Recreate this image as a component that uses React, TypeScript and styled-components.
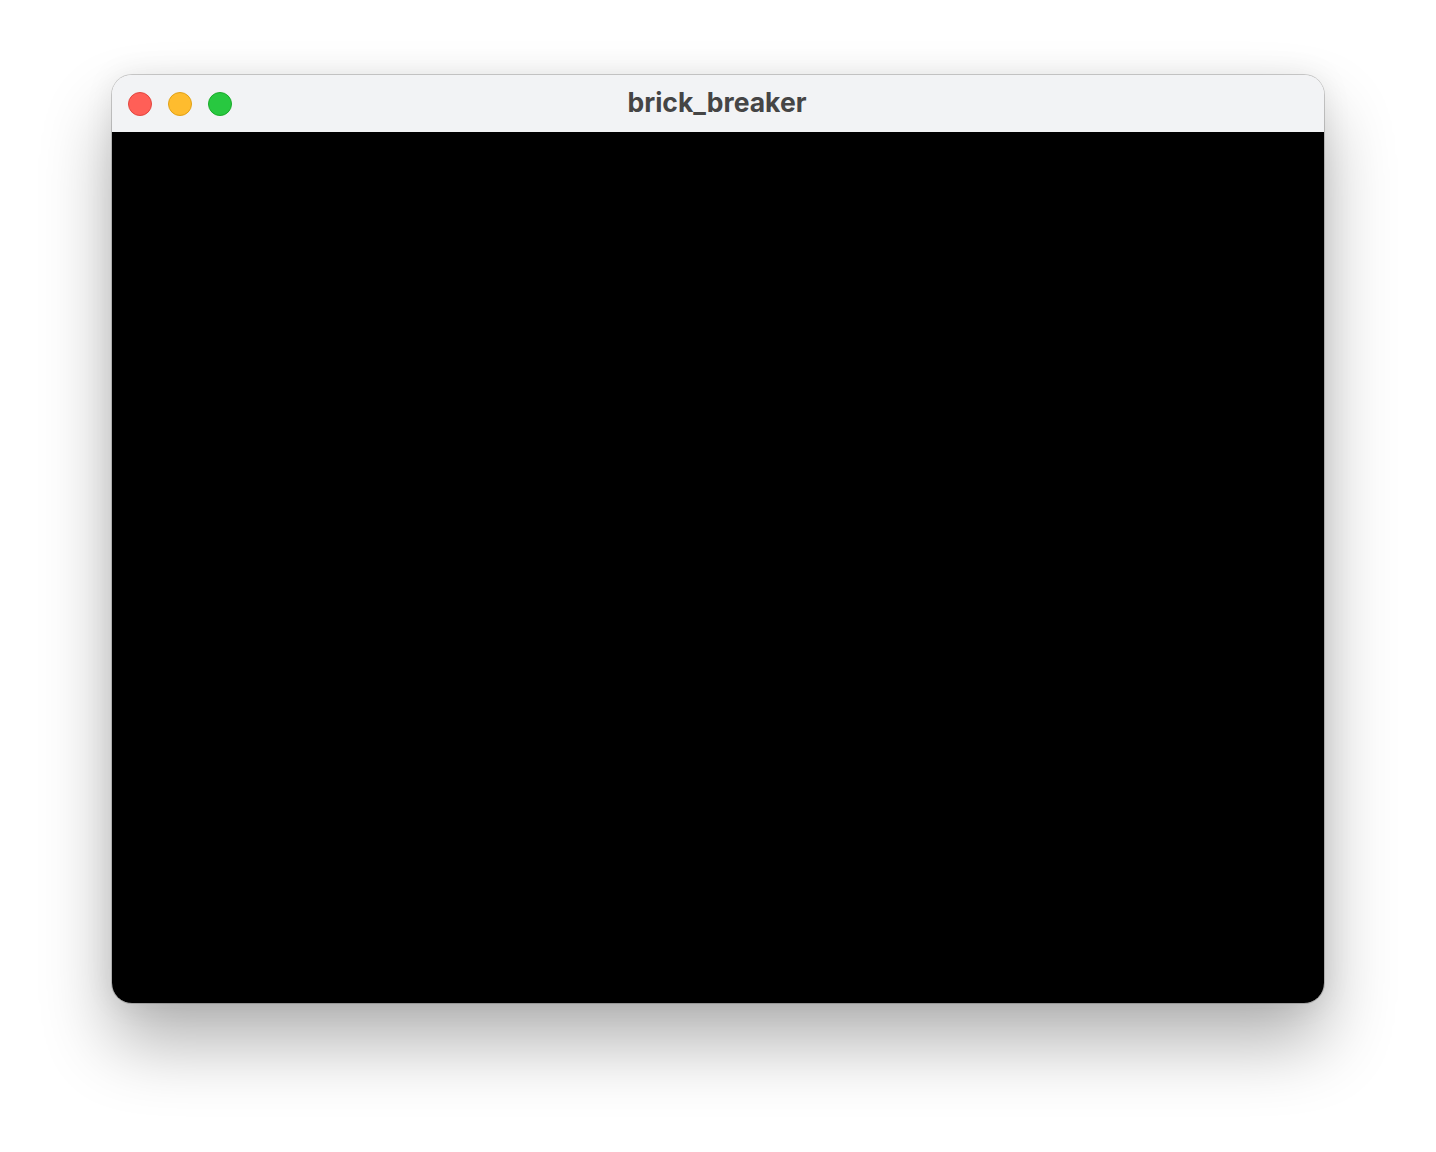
import React from 'react';
import styled, { createGlobalStyle } from 'styled-components';

const GlobalStyle = createGlobalStyle`
  html, body {
    margin: 0;
    padding: 0;
    background: #ffffff;
  }
  body {
    font-family: Inter, "Noto Sans", sans-serif;
  }
`;

const Page = styled.div`
  width: 1436px;
  height: 1152px;
  box-sizing: border-box;
  padding: 75px 112px 0;
`;

const Window = styled.div`
  width: 1212px;
  height: 928px;
  border-radius: 20px;
  overflow: hidden;
  display: flex;
  flex-direction: column;
  box-shadow: 0 0 0 1px rgba(0, 0, 0, 0.18), 0 40px 70px rgba(0, 0, 0, 0.3), 0 0 30px rgba(0, 0, 0, 0.08);
`;

const TitleBar = styled.div`
  height: 57px;
  flex-shrink: 0;
  background: #f2f3f5;
  display: grid;
  grid-template-columns: 1fr auto 1fr;
  align-items: center;
  padding: 0 16px;
`;

const Lights = styled.div`
  display: flex;
  gap: 16px;
`;

const Light = styled.span<{ $fill: string; $edge: string }>`
  width: 24px;
  height: 24px;
  border-radius: 50%;
  box-sizing: border-box;
  background: ${(p) => p.$fill};
  border: 1px solid ${(p) => p.$edge};
`;

const Title = styled.div`
  font-size: 26.5px;
  font-weight: 700;
  color: #454545;
  margin: 0 0 3px -2px;
`;

const Canvas = styled.div`
  flex: 1;
  background: #000000;
`;

export default function App() {
  return (
    <>
      <GlobalStyle />
      <Page>
        <Window>
          <TitleBar>
            <Lights>
              <Light $fill="#ff5f57" $edge="#e2463f" />
              <Light $fill="#febc2e" $edge="#e1a116" />
              <Light $fill="#28c840" $edge="#1aab29" />
            </Lights>
            <Title>brick_breaker</Title>
            <div />
          </TitleBar>
          <Canvas />
        </Window>
      </Page>
    </>
  );
}
